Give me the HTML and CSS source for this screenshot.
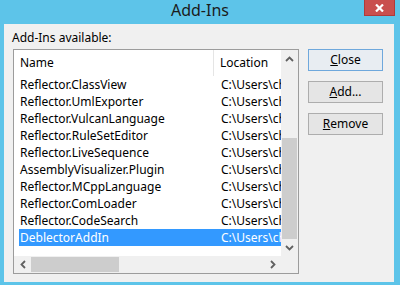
FILE: index.html
```html
<!DOCTYPE html>
<html>
<head>
<meta charset="utf-8">
<link rel="stylesheet" href="styles.css">
</head>
<body>
<div class="window">
  <div class="titlebar">
    <span class="tb-side"></span>
    <span class="title">Add-Ins</span>
    <span class="tb-side tb-right">
      <span class="close-x">
        <svg width="9" height="8" viewBox="0 0 9 8"><path d="M1 0.5 L8 7.5 M8 0.5 L1 7.5" stroke="#fff" stroke-width="2.2" fill="none"/></svg>
      </span>
    </span>
  </div>
  <div class="client">
    <div class="label">Add-Ins available:</div>
    <div class="listbox">
      <div class="listview">
        <div class="lv-header">
          <div class="hcol hname">Name</div>
          <div class="hcol hloc">Location</div>
        </div>
        <div class="lv-row"><span class="c-name">Reflector.ClassView</span><span class="c-loc">C:\Users\chen\</span></div>
        <div class="lv-row"><span class="c-name">Reflector.UmlExporter</span><span class="c-loc">C:\Users\chen\</span></div>
        <div class="lv-row"><span class="c-name">Reflector.VulcanLanguage</span><span class="c-loc">C:\Users\chen\</span></div>
        <div class="lv-row"><span class="c-name">Reflector.RuleSetEditor</span><span class="c-loc">C:\Users\chen\</span></div>
        <div class="lv-row"><span class="c-name">Reflector.LiveSequence</span><span class="c-loc">C:\Users\chen\</span></div>
        <div class="lv-row"><span class="c-name">AssemblyVisualizer.Plugin</span><span class="c-loc">C:\Users\chen\</span></div>
        <div class="lv-row"><span class="c-name">Reflector.MCppLanguage</span><span class="c-loc">C:\Users\chen\</span></div>
        <div class="lv-row"><span class="c-name">Reflector.ComLoader</span><span class="c-loc">C:\Users\chen\</span></div>
        <div class="lv-row"><span class="c-name">Reflector.CodeSearch</span><span class="c-loc">C:\Users\chen\</span></div>
        <div class="lv-row sel"><span class="c-name">DeblectorAddIn</span><span class="c-loc">C:\Users\chen\</span></div>
      </div>
      <div class="vscroll">
        <div class="sb-btn">
          <svg width="9" height="6" viewBox="0 0 9 6"><path d="M1 5 L4.5 1.5 L8 5" stroke="#606060" stroke-width="1.8" fill="none"/></svg>
        </div>
        <div class="vtrack"><div class="vthumb"></div></div>
        <div class="sb-btn">
          <svg width="9" height="6" viewBox="0 0 9 6"><path d="M1 1 L4.5 4.5 L8 1" stroke="#606060" stroke-width="1.8" fill="none"/></svg>
        </div>
      </div>
      <div class="hscroll">
        <div class="sb-btn">
          <svg width="6" height="9" viewBox="0 0 6 9"><path d="M5 1 L1.5 4.5 L5 8" stroke="#606060" stroke-width="1.8" fill="none"/></svg>
        </div>
        <div class="htrack"><div class="hthumb"></div></div>
        <div class="sb-btn">
          <svg width="6" height="9" viewBox="0 0 6 9"><path d="M1 1 L4.5 4.5 L1 8" stroke="#606060" stroke-width="1.8" fill="none"/></svg>
        </div>
      </div>
      <div class="corner"></div>
    </div>
    <div class="buttons">
      <div class="btn default"><u>C</u>lose</div>
      <div class="btn"><u>A</u>dd...</div>
      <div class="btn"><u>R</u>emove</div>
    </div>
  </div>
</div>
</body>
</html>
```
FILE: styles.css
```css
html, body {
  margin: 0;
  padding: 0;
}
body {
  width: 400px;
  height: 285px;
  overflow: hidden;
  background: #5dc4e9;
  font-family: "Noto Sans", "Open Sans", sans-serif;
  font-size: 12px;
  color: #000;
}
.window {
  width: 400px;
  height: 285px;
  display: flex;
  flex-direction: column;
}
.titlebar {
  height: 24px;
  display: grid;
  grid-template-columns: 1fr auto 1fr;
  align-items: start;
}
.title {
  font-size: 16px;
  line-height: 20px;
  color: #1b1b1b;
  padding-top: 0;
}
.tb-right {
  display: flex;
  justify-content: flex-end;
  padding-right: 5px;
}
.close-x {
  width: 31px;
  height: 16px;
  background: #c94f4e;
  box-sizing: border-box;
  border: 1px solid #b03a3a;
  border-top: none;
  display: flex;
  align-items: center;
  justify-content: center;
}
.client {
  margin: 0 6px 3px 4px;
  flex: 1;
  background: #f0f0f0;
  display: grid;
  grid-template-columns: 286px 75px;
  grid-template-rows: auto 1fr;
  column-gap: 9px;
  padding: 6px 0 0 9px;
}
.label {
  grid-column: 1 / 3;
  line-height: 16px;
  margin-left: -1px;
  margin-bottom: 3px;
}
.listbox {
  width: 286px;
  height: 225px;
  box-sizing: border-box;
  border: 1px solid #9c9c9c;
  display: grid;
  grid-template-columns: 267px 17px;
  grid-template-rows: 206px 17px;
  background: #fff;
}
.listview {
  overflow: hidden;
  background: #fff;
}
.lv-header {
  height: 26px;
  display: grid;
  grid-template-columns: 200px 1fr;
}
.hcol {
  line-height: 26px;
  padding-left: 6px;
  white-space: nowrap;
  overflow: hidden;
}
.hname {
  border-right: 1px solid #e5e5e5;
}
.lv-row {
  height: 17px;
  line-height: 17px;
  margin-left: 5px;
  display: grid;
  grid-template-columns: 195px 1fr;
  white-space: nowrap;
  overflow: hidden;
}
.c-name {
  padding-left: 1px;
  overflow: hidden;
}
.c-loc {
  padding-left: 7px;
  overflow: hidden;
}
.lv-row.sel {
  background: #3399ff;
  color: #fff;
}
.vscroll {
  background: #f0f0f0;
  display: flex;
  flex-direction: column;
}
.hscroll {
  background: #f0f0f0;
  display: flex;
}
.sb-btn {
  width: 17px;
  height: 17px;
  flex: none;
  display: flex;
  align-items: center;
  justify-content: center;
}
.vtrack {
  flex: 1;
  padding: 71px 1px 0 1px;
}
.vthumb {
  height: 101px;
  background: #cdcdcd;
}
.htrack {
  flex: 1;
  padding: 1px 0 1px 0;
  display: flex;
}
.hthumb {
  width: 88px;
  background: #cdcdcd;
}
.corner {
  background: #f0f0f0;
}
.buttons {
  display: flex;
  flex-direction: column;
  gap: 10px;
}
.btn {
  height: 22px;
  box-sizing: border-box;
  border: 1px solid #adadad;
  background: #e5e5e5;
  text-align: center;
  line-height: 20px;
}
.btn.default {
  border-color: #6fa8dc;
  background: #e8edf2;
}
```
